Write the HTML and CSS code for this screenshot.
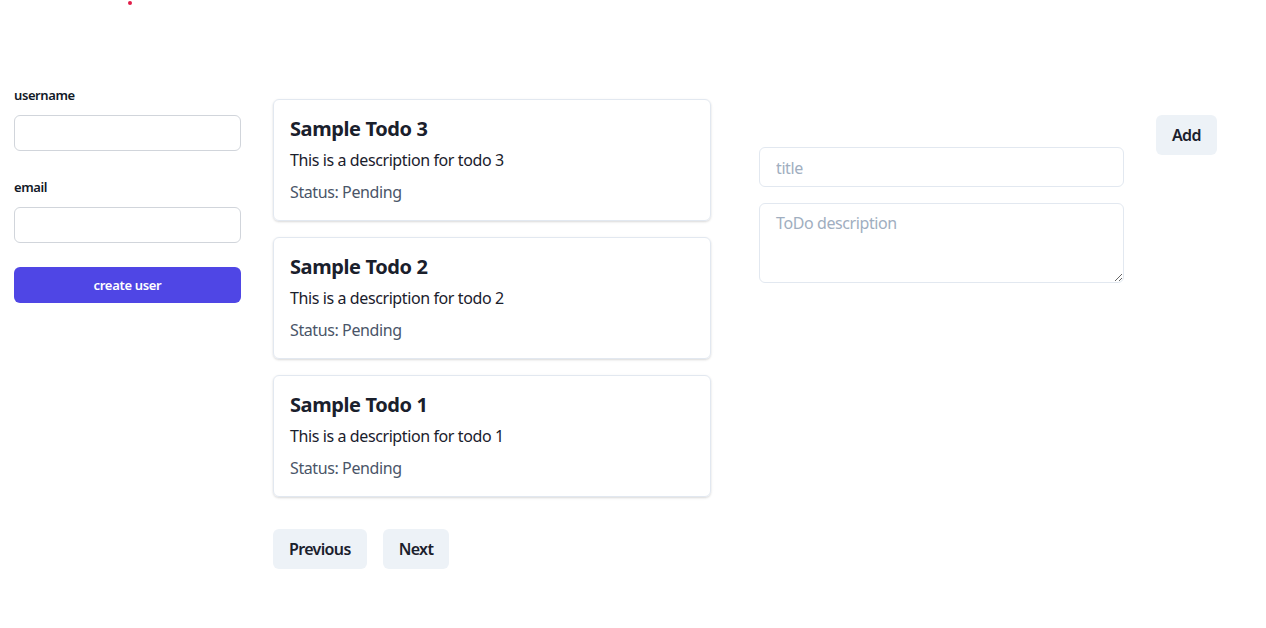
FILE: index.html
```html
<!DOCTYPE html>
<html>
<head>
<meta charset="utf-8">
<link rel="stylesheet" href="styles.css">
</head>
<body>
<div class="dot"></div>
<div class="page">
  <form class="user-form">
    <div class="field">
      <label class="lbl">username</label>
      <input class="uinput" type="text">
    </div>
    <div class="field">
      <label class="lbl">email</label>
      <input class="uinput" type="text">
    </div>
    <button type="button" class="create">create user</button>
  </form>

  <div class="todos">
    <div class="card">
      <h2 class="ctitle">Sample Todo 3</h2>
      <p class="cdesc">This is a description for todo 3</p>
      <p class="cstatus">Status: Pending</p>
    </div>
    <div class="card">
      <h2 class="ctitle">Sample Todo 2</h2>
      <p class="cdesc">This is a description for todo 2</p>
      <p class="cstatus">Status: Pending</p>
    </div>
    <div class="card">
      <h2 class="ctitle">Sample Todo 1</h2>
      <p class="cdesc">This is a description for todo 1</p>
      <p class="cstatus">Status: Pending</p>
    </div>
    <div class="pager">
      <button type="button" class="gbtn">Previous</button>
      <button type="button" class="gbtn">Next</button>
    </div>
  </div>

  <div class="new-todo">
    <input class="tinput" type="text" placeholder="title">
    <textarea class="tarea" placeholder="ToDo description"></textarea>
  </div>

  <div class="add-wrap">
    <button type="button" class="gbtn">Add</button>
  </div>
</div>
</body>
</html>
```

FILE: styles.css
```css
* { box-sizing: border-box; }
html, body { margin: 0; padding: 0; background: #fff; }
body {
  font-family: "Noto Sans", "Open Sans", "Liberation Sans", sans-serif;
  color: #1a202c;
  letter-spacing: -0.025em;
  position: relative;
}
button, input, textarea { letter-spacing: -0.025em; }
.dot {
  position: absolute;
  left: 128px;
  top: 1px;
  width: 4px;
  height: 4px;
  border-radius: 50%;
  background: #e11d48;
}
.page {
  display: flex;
  align-items: flex-start;
  padding: 86px 0 0 14px;
}
.user-form {
  width: 227px;
  display: flex;
  flex-direction: column;
  gap: 24px;
}
.field {
  display: flex;
  flex-direction: column;
}
.field + .field { margin-top: 3px; }
.lbl {
  font-size: 13px;
  font-weight: 600;
  color: #111827;
  line-height: 18px;
  margin-bottom: 11px;
}
.uinput {
  height: 36px;
  border: 1px solid #d1d5db;
  border-radius: 6px;
  font: inherit;
}
.create {
  height: 36px;
  border: 0;
  border-radius: 6px;
  background: #4f46e5;
  color: #fff;
  font: inherit;
  font-size: 13px;
  font-weight: 600;
}
.todos {
  margin-left: 32px;
  margin-top: 13px;
  width: 438px;
  display: flex;
  flex-direction: column;
  gap: 16px;
}
.card {
  border: 1px solid #e2e8f0;
  border-radius: 6px;
  padding: 16px;
  height: 122px;
  box-shadow: 0 1px 3px rgba(0,0,0,0.1), 0 1px 2px rgba(0,0,0,0.06);
}
.ctitle {
  margin: 0;
  font-size: 20px;
  font-weight: 700;
  line-height: 26px;
}
.cdesc {
  margin: 7px 0 0;
  font-size: 16px;
  line-height: 22px;
}
.cstatus {
  margin: 10px 0 0;
  font-size: 16px;
  line-height: 22px;
  color: #4a5568;
}
.pager {
  margin-top: 16px;
  display: flex;
  gap: 16px;
}
.gbtn {
  height: 40px;
  padding: 0 16px;
  border: 0;
  border-radius: 6px;
  background: #edf2f7;
  color: #1a202c;
  font: inherit;
  font-size: 16px;
  font-weight: 600;
  letter-spacing: -0.04em;
}
.new-todo {
  margin-left: 48px;
  margin-top: 61px;
  width: 365px;
  display: flex;
  flex-direction: column;
  gap: 16px;
}
.tinput {
  height: 40px;
  border: 1px solid #e2e8f0;
  border-radius: 6px;
  padding: 1px 16px 0;
  font: inherit;
  font-size: 16px;
}
.tarea {
  height: 80px;
  border: 1px solid #e2e8f0;
  border-radius: 6px;
  padding: 8px 16px;
  font: inherit;
  font-size: 16px;
  resize: vertical;
}
.tinput::placeholder, .tarea::placeholder { color: #a0aec0; }
.add-wrap {
  margin-left: 32px;
  margin-top: 29px;
}
```
